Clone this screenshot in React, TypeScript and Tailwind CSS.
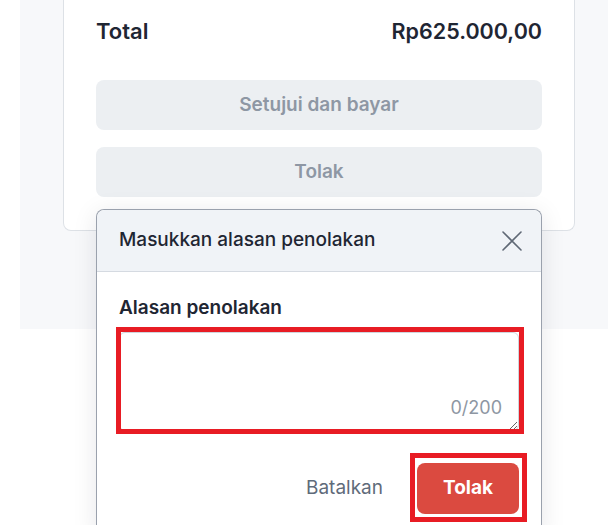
export default function App() {
  return (
    <div className="relative h-[525px] w-[608px] overflow-hidden bg-white font-['Inter',sans-serif] text-[#1f2633]">
      {/* Page section with summary card */}
      <div className="ml-[20px] h-[329px] bg-[#f7f8fa] pl-[43px] pr-[33px]">
        <div className="rounded-b-lg border border-t-0 border-[#dde1e6] bg-white px-8 pt-[17px] pb-[33px]">
          <div className="flex items-center justify-between font-semibold leading-[28px]">
            <span className="text-[22px]">Total</span>
            <span className="text-[21.5px]">Rp625.000,00</span>
          </div>

          <div className="mt-[35px] flex flex-col gap-[17px]">
            <button className="h-[50px] rounded-lg bg-[#eceff2] text-[19px] font-semibold text-[#8e97a4]">
              Setujui dan bayar
            </button>
            <button className="h-[50px] rounded-lg bg-[#eceff2] text-[19px] font-semibold text-[#8e97a4]">
              Tolak
            </button>
          </div>
        </div>
      </div>

      {/* Reject reason popover */}
      <div className="absolute left-[96px] top-[209px] w-[446px] rounded-t-lg border border-b-0 border-[#9aa1ad] bg-white shadow-[0_4px_24px_rgba(15,23,42,0.10)]">
        <div className="flex h-[62px] items-center justify-between rounded-t-lg border-b border-[#d5dae1] bg-[#f0f3f7] pl-[22px] pr-[19px]">
          <span className="text-[19px] font-medium">Masukkan alasan penolakan</span>
          <svg width="20" height="20" viewBox="0 0 20 20" fill="none" stroke="#5f6875" strokeWidth="1.6" strokeLinecap="round">
            <path d="M1 1L19 19M19 1L1 19" />
          </svg>
        </div>

        <div className="px-[22px] pt-[24px] pb-[20px]">
          <label className="block text-[19px] font-semibold leading-[24px]">Alasan penolakan</label>
          <div className="relative mt-[12px]">
            <textarea className="block h-[99px] w-full resize-y rounded-md border border-[#cfd5dc] bg-white px-3 py-2 text-[16px] outline-none" />
            <span className="pointer-events-none absolute bottom-[10px] right-[17px] text-[18px] text-[#8e97a3]">
              0/200
            </span>
          </div>

          <div className="mt-[32px] flex items-center justify-end gap-[34px]">
            <span className="text-[19px] text-[#5f6b7a]">Batalkan</span>
            <button className="h-[51px] w-[102px] rounded-lg bg-[#db4a40] text-[19px] font-bold text-white">
              Tolak
            </button>
          </div>
        </div>
      </div>

      {/* Red annotation boxes */}
      <div className="pointer-events-none absolute left-[116px] top-[327px] h-[107px] w-[408px] border-[5px] border-[#e81c24]" />
      <div className="pointer-events-none absolute left-[410px] top-[453px] h-[69px] w-[117px] border-[5px] border-[#e81c24]" />
    </div>
  );
}
